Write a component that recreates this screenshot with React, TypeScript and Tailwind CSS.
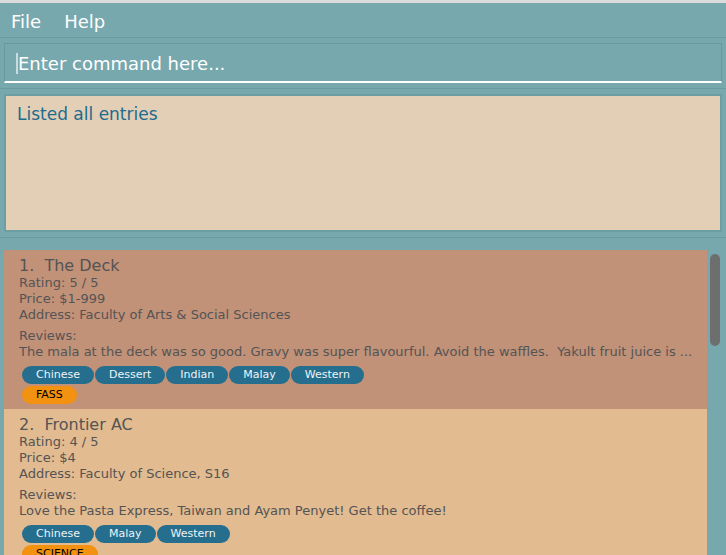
import React from "react";

type Entry = {
  idx: number;
  name: string;
  rating: string;
  price: string;
  address: string;
  review: string;
  tags: string[];
  faculty: string;
  bg: string;
};

const entries: Entry[] = [
  {
    idx: 1,
    name: "The Deck",
    rating: "5 / 5",
    price: "$1-999",
    address: "Faculty of Arts & Social Sciences",
    review:
      "The mala at the deck was so good. Gravy was super flavourful. Avoid the waffles.  Yakult fruit juice is ...",
    tags: ["Chinese", "Dessert", "Indian", "Malay", "Western"],
    faculty: "FASS",
    bg: "bg-[#c19178]",
  },
  {
    idx: 2,
    name: "Frontier AC",
    rating: "4 / 5",
    price: "$4",
    address: "Faculty of Science, S16",
    review: "Love the Pasta Express, Taiwan and Ayam Penyet! Get the coffee!",
    tags: ["Chinese", "Malay", "Western"],
    faculty: "SCIENCE",
    bg: "bg-[#e2bb90]",
  },
];

function Card({ e }: { e: Entry }) {
  return (
    <div className={`${e.bg} px-[15px] pt-[6px] pb-[5px] text-[#545454]`}>
      <div className="text-[16px] leading-[19px] whitespace-pre">
        {e.idx}.  {e.name}
      </div>
      <div className="text-[13px] leading-[16px]">Rating: {e.rating}</div>
      <div className="text-[13px] leading-[16px]">Price: {e.price}</div>
      <div className="text-[13px] leading-[16px]">Address: {e.address}</div>
      <div className="mt-[5px] text-[13px] leading-[16px]">Reviews:</div>
      <div className="text-[13px] leading-[16px] whitespace-pre overflow-hidden">{e.review}</div>
      <div className="mt-[6px] ml-[3px] flex gap-[1px]">
        {e.tags.map((t) => (
          <span
            key={t}
            className="h-[18px] px-[14px] rounded-full bg-[#256e8e] text-[#eef4f6] text-[11px] leading-[18px]"
          >
            {t}
          </span>
        ))}
      </div>
      <div className="mt-[2px] ml-[3px] flex">
        <span className="h-[18px] px-[14px] rounded-full bg-[#f39110] text-black text-[11px] leading-[18px]">
          {e.faculty}
        </span>
      </div>
    </div>
  );
}

export default function App() {
  return (
    <div className="w-[726px] h-[555px] overflow-hidden bg-[#77a8ae] flex flex-col font-['DejaVu_Sans',sans-serif]">
      <div className="h-[3px] bg-[#dcdcdc] shrink-0" />
      <div className="h-[35px] shrink-0 flex items-center pl-[11px] pt-[2px] gap-[23px] text-[18px] text-white border-b border-[#6a9ba1]">
        <span>File</span>
        <span>Help</span>
      </div>
      <div className="shrink-0 px-[4px] pt-[5px] pb-[5px] border-b border-[#6a9ba1]">
        <div className="h-[40px] border border-[#659aa0] border-b-2 border-b-white flex items-center pl-[11px] pt-[2px]">
          <span className="w-[2px] h-[21px] bg-[#c9dde0]" />
          <span className="text-[18px] text-white">Enter command here...</span>
        </div>
      </div>
      <div className="shrink-0 px-[4px] pt-[5px] pb-[5px] border-b border-[#6a9ba1]">
        <div className="h-[138px] border-2 border-[#6d9ea4] bg-[#e2cfb6] pl-[11px] pt-[8px]">
          <div className="text-[17px] leading-[20px] text-[#1d6b8f]">Listed all entries</div>
        </div>
      </div>
      <div className="flex-1 flex pt-[12px] pl-[4px] overflow-hidden">
        <div className="w-[703px] flex flex-col">
          {entries.map((e) => (
            <Card key={e.idx} e={e} />
          ))}
        </div>
        <div className="w-[19px] pl-[3px] pt-[4px]">
          <div className="w-[10px] h-[92px] rounded-full bg-[#6e6e6e]" />
        </div>
      </div>
    </div>
  );
}
